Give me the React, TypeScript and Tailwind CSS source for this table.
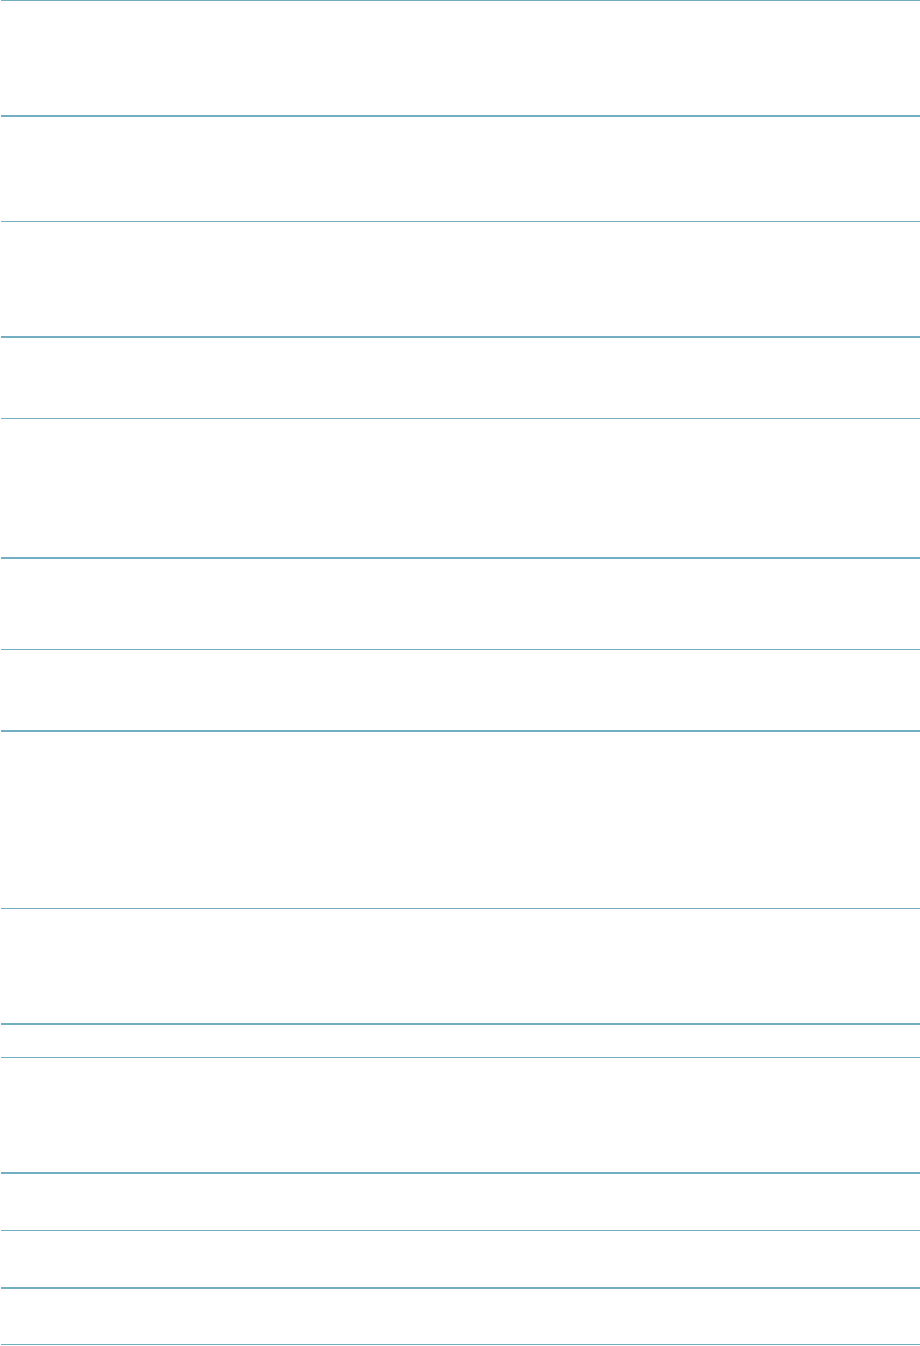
export default function App() {
  return (
    <div className="min-h-[1346px] w-full bg-white pl-px">
      <div className="flex flex-col">
        <div className="h-[115px] border-t border-[#73aec2]" />
        <div className="h-[106px] border-t-2 border-[#73aec2]" />
        <div className="h-[115px] border-t border-[#73aec2]" />
        <div className="h-[82px] border-t-2 border-[#73aec2]" />
        <div className="h-[139px] border-t border-[#73aec2]" />
        <div className="h-[92px] border-t-2 border-[#73aec2]" />
        <div className="h-[81px] border-t border-[#73aec2]" />
        <div className="h-[178px] border-t-2 border-[#73aec2]" />
        <div className="h-[115px] border-t border-[#73aec2]" />
        <div className="h-[34px] border-t-2 border-[#73aec2]" />
        <div className="h-[115px] border-t border-[#73aec2]" />
        <div className="h-[58px] border-t-2 border-[#73aec2]" />
        <div className="h-[57px] border-t border-[#73aec2]" />
        <div className="h-[57px] border-t-2 border-[#73aec2]" />
        <div className="h-px border-t border-[#73aec2]" />
      </div>
    </div>
  );
}
